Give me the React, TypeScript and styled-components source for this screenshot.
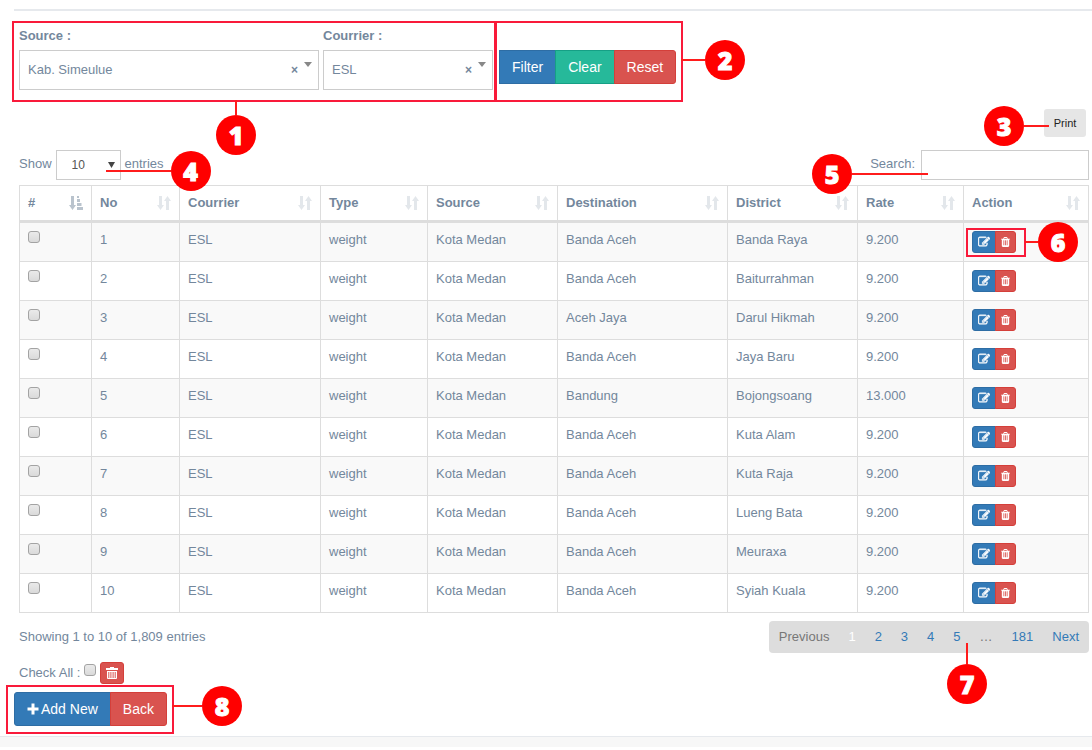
import React from "react";
import styled, { createGlobalStyle, css } from "styled-components";

const text = "#73879c";
const line = "#dddddd";
const mark = "#f91a3a";

const GlobalStyle = createGlobalStyle`
  *, *::before, *::after { box-sizing: border-box; }
  body {
    margin: 0;
    background: #fff;
    color: ${text};
    font: 13px/18px "Liberation Sans", Arial, sans-serif;
  }
  button, input, select { font-family: inherit; }
`;

const Page = styled.main`
  padding-top: 9px;
`;

const Divider = styled.hr`
  height: 2px;
  margin: 0 0 0 14px;
  border: 0;
  background: #e6e9ed;
`;

const Content = styled.div`
  padding: 14px 3px 0 19px;
`;

const Filters = styled.form`
  display: flex;
  align-items: flex-end;
  gap: 6px;
`;

const Fields = styled.div`
  position: relative;
  display: flex;
  gap: 4px;
`;

const Field = styled.div<{ $width: number }>`
  width: ${(p) => p.$width}px;
`;

const FieldLabel = styled.label`
  display: block;
  height: 25px;
  padding: 2px 0 0;
  font-weight: 700;
`;

const Combo = styled.div`
  position: relative;
`;

const ComboSelect = styled.select`
  appearance: none;
  display: block;
  width: 100%;
  height: 40px;
  padding: 0 40px 2px 8px;
  border: 1px solid #ccc;
  border-radius: 0;
  background: #fff;
  color: ${text};
  font-size: 13px;
`;

const ComboTools = styled.div`
  position: absolute;
  top: 10px;
  right: 7px;
  display: flex;
  align-items: flex-start;
  gap: 6px;
`;

const ClearChoice = styled.button`
  padding: 0;
  border: 0;
  background: none;
  color: ${text};
  font-size: 12px;
  font-weight: 700;
  line-height: 20px;
`;

const ComboArrow = styled.svg`
  width: 8px;
  height: 5px;
  margin-top: 2px;
  fill: #888;
`;

const tones = {
  blue: css`background: #337ab7; border-color: #2e6da4;`,
  green: css`background: #26b99a; border-color: #169f85;`,
  red: css`background: #d9534f; border-color: #d43f3a;`,
};

const Button = styled.button<{ $tone: keyof typeof tones; $small?: boolean }>`
  display: inline-flex;
  align-items: center;
  justify-content: center;
  gap: 2px;
  border: 1px solid;
  border-radius: 3px;
  color: #fff;
  white-space: nowrap;
  ${(p) =>
    p.$small
      ? css`height: 22px; padding: 0 5px; font-size: 12px;`
      : css`height: 34px; padding: 0 12px; font-size: 14px;`}
  ${(p) => tones[p.$tone]}
`;

const ButtonGroup = styled.div<{ $square?: boolean }>`
  position: relative;
  display: flex;
  width: max-content;
  ${Button} + ${Button} { margin-left: -1px; }
  ${Button}:not(:first-of-type) { border-top-left-radius: 0; border-bottom-left-radius: 0; }
  ${Button}:not(:last-of-type) { border-top-right-radius: 0; border-bottom-right-radius: 0; }
  ${(p) => p.$square && css`${Button}:first-of-type { border-radius: 0; }`}
`;

const FilterActions = styled.div`
  align-self: flex-start;
  padding-top: 25px;
`;

/* Numbered guide marks laid over the controls that they explain. */
const Frame = styled.span<{ $inset: string }>`
  position: absolute;
  inset: ${(p) => p.$inset};
  border: 2px solid ${mark};
  pointer-events: none;
`;

const Callout = styled.span<{ $place: string; $flow?: "row" | "row-reverse" | "column"; $lead: number }>`
  position: absolute;
  inset: ${(p) => p.$place};
  z-index: 1;
  display: flex;
  flex-direction: ${(p) => p.$flow ?? "row"};
  align-items: center;
  width: max-content;
  height: max-content;
  pointer-events: none;
  &::before {
    content: "";
    background: #ff1c1c;
    ${(p) =>
      p.$flow === "column"
        ? css`width: 2px; height: ${p.$lead}px;`
        : css`width: ${p.$lead}px; height: 2px;`}
  }
`;

const Badge = styled.b`
  display: grid;
  place-items: center;
  width: 40px;
  height: 40px;
  border-radius: 50%;
  background: #f00;
  color: #fff;
  font: 800 25px/40px "Open Sans", sans-serif;
  -webkit-text-stroke: 1px #fff;
`;

const PrintRow = styled.div`
  display: flex;
  justify-content: flex-end;
  padding: 19px 3px 13px 0;
`;

const Anchor = styled.div`
  position: relative;
`;

const PrintButton = styled.button`
  display: block;
  min-width: 42px;
  height: 28px;
  padding: 0 9px;
  border: 0;
  border-radius: 3px;
  background: #e6e6e6;
  color: #222;
  font-size: 11px;
`;

const TableTools = styled.div`
  display: flex;
  justify-content: space-between;
  margin-bottom: 5px;
`;

const ToolLabel = styled.label`
  position: relative;
  display: flex;
  gap: 4px;
  line-height: 27px;
`;

const LengthBox = styled.span`
  position: relative;
  display: block;
`;

const LengthSelect = styled.select`
  appearance: none;
  display: block;
  width: 65px;
  height: 30px;
  padding: 0 15px;
  border: 1px solid #ccc;
  border-radius: 0;
  background: #fff;
  color: #555;
  font-size: 12px;
`;

const LengthArrow = styled.svg`
  position: absolute;
  top: 12px;
  right: 6px;
  width: 7px;
  height: 6px;
  fill: #444;
  pointer-events: none;
`;

const SearchInput = styled.input`
  width: 168px;
  height: 30px;
  margin-left: 2px;
  padding: 0 10px;
  border: 1px solid #ccc;
  border-radius: 0;
  font-size: 12px;
`;

const Table = styled.table`
  width: 100%;
  table-layout: fixed;
  border-collapse: separate;
  border-spacing: 0;
  border: solid ${line};
  border-width: 1px 0 0 1px;
`;

const HeadCell = styled.th`
  height: 37px;
  padding: 0 8px;
  border: solid ${line};
  border-width: 0 1px 3px 0;
  text-align: left;
`;

const HeadInner = styled.div`
  display: flex;
  align-items: center;
  justify-content: space-between;
`;

const SortIcon = styled.svg<{ $active?: boolean }>`
  width: 14px;
  height: 14px;
  flex: none;
  fill: ${(p) => (p.$active ? "#b9c3cd" : "#e3e7eb")};
`;

const Row = styled.tr`
  &:nth-child(odd) { background: #f9f9f9; }
`;

const Cell = styled.td`
  height: 39px;
  padding: 8px;
  border: solid ${line};
  border-width: 0 1px 1px 0;
  vertical-align: top;
  line-height: 18px;
`;

const Check = styled.input`
  appearance: none;
  display: block;
  width: 12px;
  height: 12px;
  margin: 0;
  border: 1px solid #a3a3a3;
  border-radius: 3px;
  background: linear-gradient(#eaeaea, #dadada);
  &:checked { background: ${text}; }
`;

const Icon = styled.svg<{ $width?: number }>`
  width: ${(p) => p.$width ?? 12}px;
  height: 12px;
  fill: currentColor;
`;

const TableFooter = styled.div`
  display: flex;
  justify-content: space-between;
  align-items: flex-start;
  padding-top: 8px;
  line-height: 32px;
`;

const Pages = styled.nav`
  position: relative;
  display: flex;
  gap: 19px;
  padding: 0 10px;
  border-radius: 4px;
  background: #ddd;
`;

const PageLink = styled.a<{ $state?: "off" | "current" }>`
  color: ${(p) => (p.$state === "off" ? "#777" : p.$state === "current" ? "#fff" : "#337ab7")};
  text-decoration: none;
`;

const CheckAll = styled.div`
  display: flex;
  gap: 4px;
  padding: 9px 0 8px;
  line-height: 22px;
`;

const CheckAllLabel = styled.label`
  display: flex;
  gap: 4px;
  ${Check} { margin-top: 2px; }
`;

const BottomActions = styled.div`
  padding: 0 0 10px 14px;
`;

const Footer = styled.footer`
  height: 11px;
  border-top: 1px solid #e6e9ed;
  background: #f7f7f7;
`;

const EditIcon = () => (
  <Icon viewBox="0 0 1792 1792" stroke="currentColor" strokeWidth="70" aria-hidden="true">
    <path d="M888 1184l116-116-152-152-116 116v56h96v96h56zm440-720q-16-16-33 1l-350 350q-17 17-1 33t33-1l350-350q17-17 1-33zm80 594v190q0 119-84.5 203.5t-203.5 84.5h-832q-119 0-203.500-84.500t-84.500-203.500v-832q0-119 84.500-203.500t203.500-84.500h832q63 0 117 25 15 7 18 23 3 17-9 29l-49 49q-14 14-32 8-23-6-45-6h-832q-66 0-113 47t-47 113v832q0 66 47 113t113 47h832q66 0 113-47t47-113v-126q0-13 9-22l64-64q15-15 35-7t20 29zm-96-738l288 288-672 672h-288v-288zm444 132l-92 92-288-288 92-92q28-28 68-28t68 28l152 152q28 28 28 68t-28 68z" />
  </Icon>
);

const TrashIcon = () => (
  <Icon $width={9} viewBox="192 0 1408 1792" aria-hidden="true">
    <path d="M704 1376v-704q0-14-9-23t-23-9h-64q-14 0-23 9t-9 23v704q0 14 9 23t23 9h64q14 0 23-9t9-23zm256 0v-704q0-14-9-23t-23-9h-64q-14 0-23 9t-9 23v704q0 14 9 23t23 9h64q14 0 23-9t9-23zm256 0v-704q0-14-9-23t-23-9h-64q-14 0-23 9t-9 23v704q0 14 9 23t23 9h64q14 0 23-9t9-23zm-544-992h448l-48-117q-7-9-17-11h-317q-10 2-17 11zm928 32v64q0 14-9 23t-23 9h-96v948q0 83-47 143.500t-113 60.500h-832q-66 0-113-58.500t-47-141.500v-952h-96q-14 0-23-9t-9-23v-64q0-14 9-23t23-9h309l70-167q15-37 54-63t79-26h320q40 0 79 26t54 63l70 167h309q14 0 23 9t9 23z" />
  </Icon>
);

const BinIcon = () => (
  <Icon viewBox="0 0 12 12" aria-hidden="true">
    <path
      fillRule="evenodd"
      d="M4 0h4v1h4v2H0V1h4zM1 4h10v7q0 1-1 1H2q-1 0-1-1zM2.300 5v6h1V5zM4.400 5v6h1V5zM6.600 5v6h1V5zM8.700 5v6h1V5z"
    />
  </Icon>
);

const PlusIcon = () => (
  <Icon viewBox="0 0 12 12" aria-hidden="true">
    <path d="M4.500.5h3v4h4v3h-4v4h-3v-4h-4v-3h4z" />
  </Icon>
);

const Sort = ({ active }: { active?: boolean }) => (
  <SortIcon $active={active} viewBox="0 0 14 14" aria-hidden="true">
    <path d="M2 0h3v9h2l-3.500 5L0 9h2z" />
    {active ? (
      <path d="M8 0h2v2H8zM8 3h3v3H8zM8 7h4.500v3H8zM8 11h6v3H8z" />
    ) : (
      <path d="M9 14h3V5h2l-3.500-5L7 5h2z" />
    )}
  </SortIcon>
);

const columns: [string, number][] = [
  ["#", 72],
  ["No", 88],
  ["Courrier", 141],
  ["Type", 107],
  ["Source", 130],
  ["Destination", 170],
  ["District", 130],
  ["Rate", 106],
  ["Action", 125],
];

const rows = [
  ["Banda Aceh", "Banda Raya", "9.200"],
  ["Banda Aceh", "Baiturrahman", "9.200"],
  ["Aceh Jaya", "Darul Hikmah", "9.200"],
  ["Banda Aceh", "Jaya Baru", "9.200"],
  ["Bandung", "Bojongsoang", "13.000"],
  ["Banda Aceh", "Kuta Alam", "9.200"],
  ["Banda Aceh", "Kuta Raja", "9.200"],
  ["Banda Aceh", "Lueng Bata", "9.200"],
  ["Banda Aceh", "Meuraxa", "9.200"],
  ["Banda Aceh", "Syiah Kuala", "9.200"],
];

function ComboField({ id, label, value, width }: { id: string; label: string; value: string; width: number }) {
  return (
    <Field $width={width}>
      <FieldLabel htmlFor={id}>{label} :</FieldLabel>
      <Combo>
        <ComboSelect id={id} defaultValue={value}>
          <option>{value}</option>
        </ComboSelect>
        <ComboTools>
          <ClearChoice type="button" aria-label={`Clear ${label}`}>×</ClearChoice>
          <ComboArrow viewBox="0 0 8 5" aria-hidden="true"><path d="M0 0h8L4 5z" /></ComboArrow>
        </ComboTools>
      </Combo>
    </Field>
  );
}

export default function App() {
  return (
    <>
      <GlobalStyle />
      <Page>
        <Divider />
        <Content>
          <Filters onSubmit={(e) => e.preventDefault()}>
            <Fields>
              <ComboField id="source" label="Source" value="Kab. Simeulue" width={300} />
              <ComboField id="courrier" label="Courrier" value="ESL" width={170} />
              <Frame $inset="-4px -3px -12px -7px" />
              <Callout $place="75px auto auto 197px" $flow="column" $lead={15}><Badge>1</Badge></Callout>
            </Fields>
            <FilterActions>
              <ButtonGroup $square>
                <Button $tone="blue">Filter</Button>
                <Button $tone="green" type="button">Clear</Button>
                <Button $tone="red" type="reset">Reset</Button>
                <Frame $inset="-29px -7px -18px -4px" />
                <Callout $place="-10px auto auto 182px" $lead={24}><Badge>2</Badge></Callout>
              </ButtonGroup>
            </FilterActions>
          </Filters>

          <PrintRow>
            <Anchor>
              <PrintButton type="button">Print</PrintButton>
              <Callout $place="-3px auto auto -60px" $flow="row-reverse" $lead={25}><Badge>3</Badge></Callout>
            </Anchor>
          </PrintRow>

          <TableTools>
            <ToolLabel>
              Show
              <LengthBox>
                <LengthSelect defaultValue="10">
                  <option>10</option>
                  <option>25</option>
                </LengthSelect>
                <LengthArrow viewBox="0 0 7 6"><path d="M0 0h7L3.500 6z" /></LengthArrow>
                <Callout $place="1px auto auto 50px" $lead={65}><Badge>4</Badge></Callout>
              </LengthBox>
              entries
            </ToolLabel>
            <ToolLabel>
              Search:
              <SearchInput type="search" />
              <Callout $place="4px auto auto -58px" $flow="row-reverse" $lead={76}><Badge>5</Badge></Callout>
            </ToolLabel>
          </TableTools>

          <Table>
            <colgroup>
              {columns.map(([name, width]) => (
                <col key={name} width={width} />
              ))}
            </colgroup>
            <thead>
              <tr>
                {columns.map(([name], i) => (
                  <HeadCell key={name} scope="col">
                    <HeadInner>{name}<Sort active={i === 0} /></HeadInner>
                  </HeadCell>
                ))}
              </tr>
            </thead>
            <tbody>
              {rows.map(([destination, district, rate], i) => (
                <Row key={district}>
                  <Cell><Check type="checkbox" aria-label={`Select row ${i + 1}`} /></Cell>
                  <Cell>{i + 1}</Cell>
                  <Cell>ESL</Cell>
                  <Cell>weight</Cell>
                  <Cell>Kota Medan</Cell>
                  <Cell>{destination}</Cell>
                  <Cell>{district}</Cell>
                  <Cell>{rate}</Cell>
                  <Cell>
                    <ButtonGroup>
                      <Button $tone="blue" $small type="button" aria-label="Edit"><EditIcon /></Button>
                      <Button $tone="red" $small type="button" aria-label="Delete"><TrashIcon /></Button>
                      {i === 0 && (
                        <>
                          <Frame $inset="-3px -10px -4px -6px" />
                          <Callout $place="-9px auto auto 53px" $lead={13}><Badge>6</Badge></Callout>
                        </>
                      )}
                    </ButtonGroup>
                  </Cell>
                </Row>
              ))}
            </tbody>
          </Table>

          <TableFooter>
            <span>Showing 1 to 10 of 1,809 entries</span>
            <Pages aria-label="Pages">
              <PageLink $state="off" href="#previous">Previous</PageLink>
              <PageLink $state="current" href="#1">1</PageLink>
              <PageLink href="#2">2</PageLink>
              <PageLink href="#3">3</PageLink>
              <PageLink href="#4">4</PageLink>
              <PageLink href="#5">5</PageLink>
              <PageLink as="span" $state="off">…</PageLink>
              <PageLink href="#181">181</PageLink>
              <PageLink href="#next">Next</PageLink>
              <Callout $place="22px 102px auto auto" $flow="column" $lead={21}><Badge>7</Badge></Callout>
            </Pages>
          </TableFooter>

          <CheckAll>
            <CheckAllLabel>Check All : <Check type="checkbox" /></CheckAllLabel>
            <Button $tone="red" $small type="button" aria-label="Delete checked"><BinIcon /></Button>
          </CheckAll>
        </Content>
        <BottomActions>
          <ButtonGroup>
            <Button $tone="blue" type="button"><PlusIcon />Add New</Button>
            <Button $tone="red" type="button">Back</Button>
            <Frame $inset="-7px -7px -8px -8px" />
            <Callout $place="-6px auto auto 158px" $lead={30}><Badge>8</Badge></Callout>
          </ButtonGroup>
        </BottomActions>
        <Footer />
      </Page>
    </>
  );
}
